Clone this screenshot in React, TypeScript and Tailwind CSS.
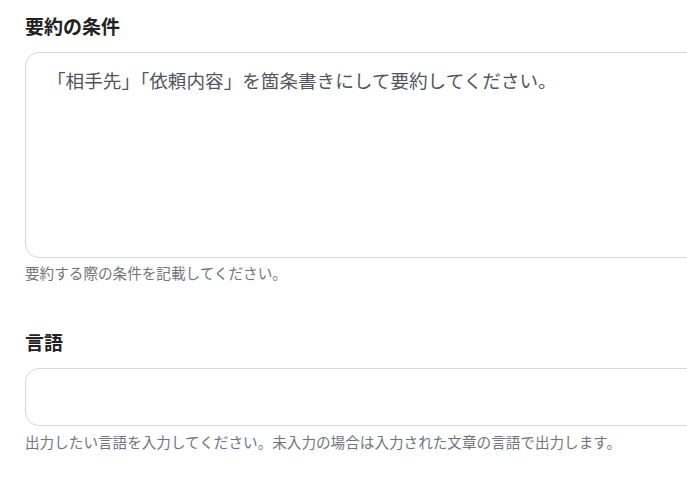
import { useState } from 'react';

const font = { fontFamily: '"Noto Sans CJK JP", "Noto Sans", sans-serif' };

export default function App() {
  const [condition, setCondition] = useState('「相手先」「依頼内容」を箇条書きにして要約してください。');
  const [lang, setLang] = useState('');

  return (
    <div className="w-screen min-h-screen overflow-hidden bg-white" style={font}>
      <div className="pl-[25px] pt-[12px] w-[740px]">
        {/* 要約の条件 */}
        <label className="block text-[19px] leading-[28px] font-bold text-[#222]">要約の条件</label>
        <textarea
          value={condition}
          onChange={e => setCondition(e.target.value)}
          className="mt-3 block w-[700px] h-[206px] resize-none rounded-[14px] border border-[#d4d7dc] bg-white pl-[21px] pr-5 pt-[13px] text-[18.6px] leading-[28px] text-[#51565e] outline-none"
          style={font}
        />
        <p className="mt-[5px] text-[14.6px] leading-[20px] text-[#70757c]">要約する際の条件を記載してください。</p>

        {/* 言語 */}
        <label className="mt-[45px] block text-[19px] leading-[28px] font-bold text-[#222]">言語</label>
        <input
          value={lang}
          onChange={e => setLang(e.target.value)}
          className="mt-3 block w-[700px] h-[58px] rounded-[14px] border border-[#d4d7dc] bg-white px-5 text-[18px] text-[#51565e] outline-none"
          style={font}
        />
        <p className="mt-[6px] text-[14.6px] leading-[20px] text-[#70757c]">
          出力したい言語を入力してください。未入力の場合は入力された文章の言語で出力します。
        </p>
      </div>
    </div>
  );
}
